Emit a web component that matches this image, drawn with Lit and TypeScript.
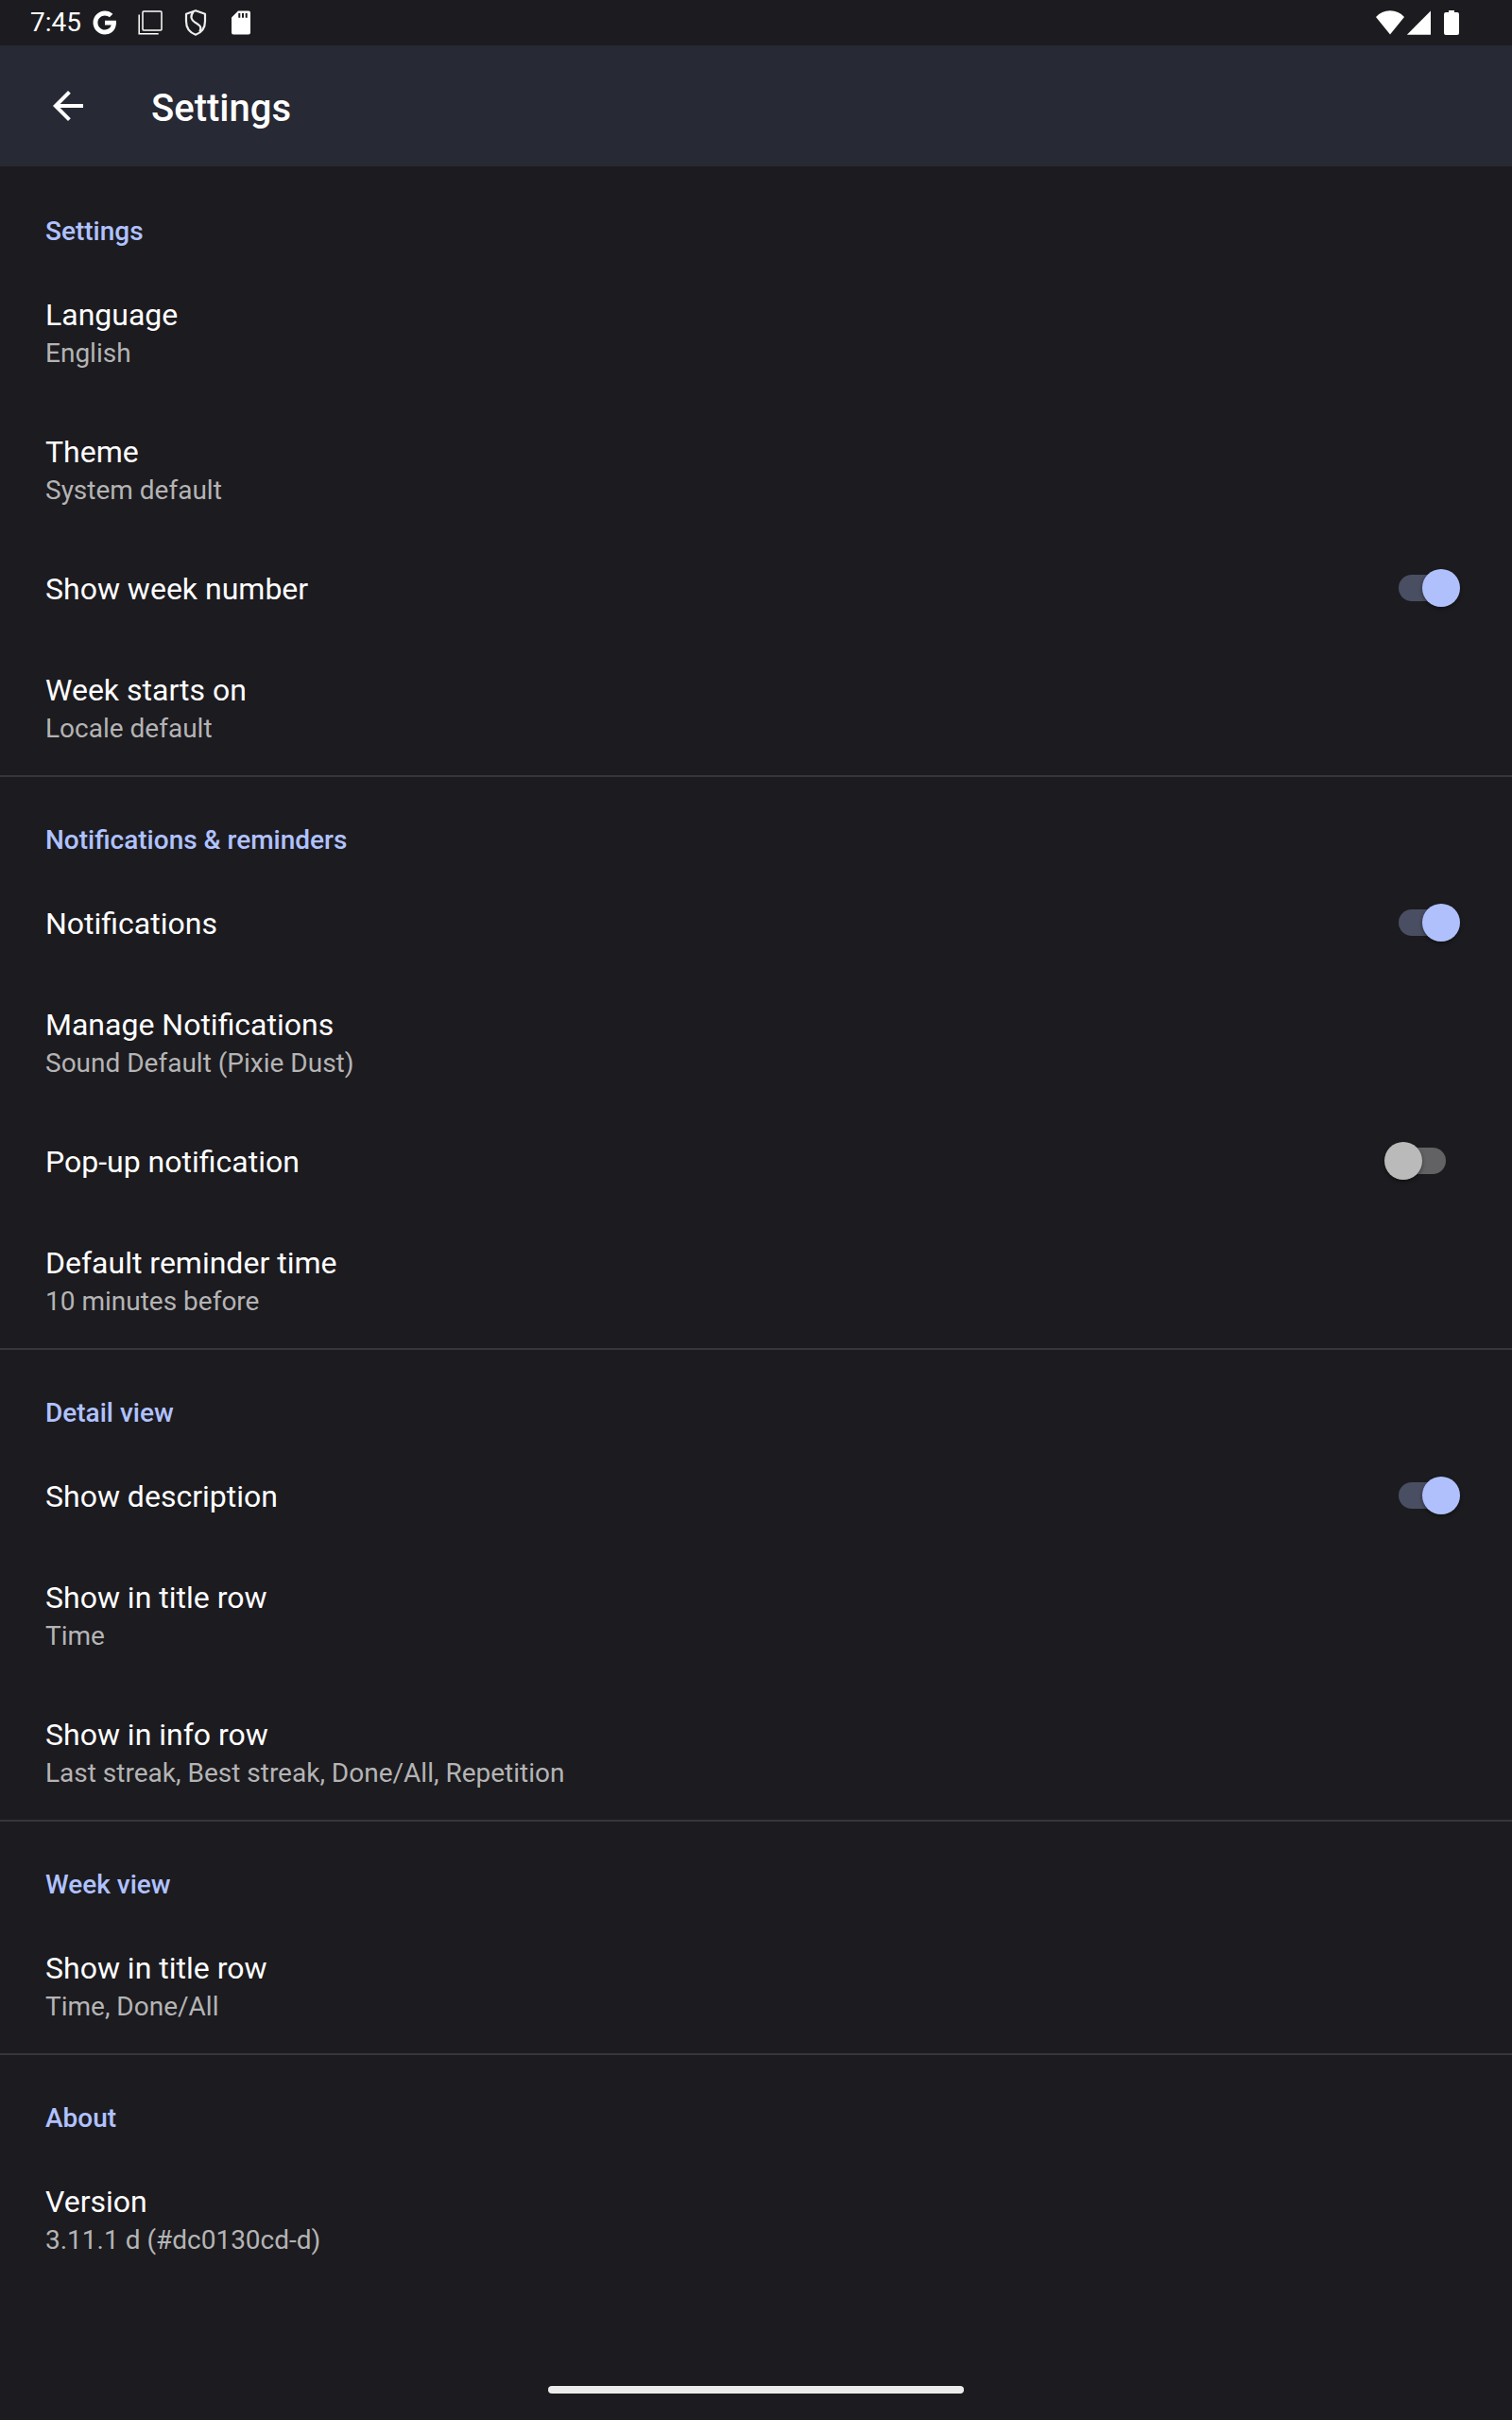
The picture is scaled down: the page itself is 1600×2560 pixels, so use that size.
import { LitElement, html, css, svg, nothing } from "lit";
import { customElement, state } from "lit/decorators.js";

interface Row {
  title: string;
  summary?: string;
  on?: boolean;
}

interface Section {
  heading: string;
  rows: Row[];
}

const statusIcons = {
  google: svg`<path fill="#fff" transform="translate(8.300 9) scale(1.250)" d="M12.545,10.239v3.821h5.445c-0.712,2.315-2.647,3.972-5.445,3.972c-3.332,0-6.033-2.701-6.033-6.032s2.701-6.032,6.033-6.032c1.498,0,2.866,0.549,3.921,1.453l2.814-2.814C17.503,2.988,15.139,2,12.545,2C7.021,2,2.543,6.477,2.543,12s4.478,10,10.002,10c8.396,0,10.249-7.85,9.426-11.748L12.545,10.239z"/>`,
  screens: svg`<rect x="16" y="12" width="20" height="20" rx="1" fill="none" stroke="#fff" stroke-width="1.500"/><path d="M12.200 15.500v20.300h20.500" fill="none" stroke="#fff" stroke-width="1.500"/>`,
  shield: svg`<path d="M24 11.200 34 14.700V22.500C34 29.500 30 34.500 24 36.700C18 34.500 14 29.500 14 22.500V14.700Z" fill="none" stroke="#eee" stroke-width="2.200" stroke-linejoin="round"/><path d="M21.500 12.500C18 17.500 19 20.800 23.500 23.800C28.500 27 31 28.500 28.300 33.500" fill="none" stroke="#eee" stroke-width="2.200"/>`,
  sdcard: svg`<path fill="#fff" fill-rule="evenodd" d="M21 11.500H32A2 2 0 0 1 34 13.500V34.500A2 2 0 0 1 32 36.500H16A2 2 0 0 1 14 34.500V18.500ZM21.300 14V18.800H23.300V14ZM25 14V18.800H27V14ZM28.700 14V18.800H30.700V14Z"/>`,
};

@customElement("app-root")
export class AppRoot extends LitElement {
  static styles = css`
    :host {
      display: flex;
      flex-direction: column;
      min-height: 100vh;
      background: #1c1b1f;
      color: #fff;
      font-family: Roboto, "Noto Sans", sans-serif;
    }
    .status {
      display: flex;
      align-items: center;
      height: 48px;
      padding: 0 48px 0 32px;
    }
    .time {
      margin-right: 1px;
      font-size: 28px;
      line-height: 38px;
    }
    .slot {
      width: 48px;
      height: 48px;
    }
    .system {
      display: flex;
      margin-left: auto;
    }
    .signal {
      width: 32px;
      height: 48px;
    }
    .bar {
      display: flex;
      align-items: center;
      gap: 64px;
      height: 128px;
      padding: 0 48px;
      box-sizing: border-box;
      background: #272934;
    }
    .back {
      display: flex;
      padding: 0;
      border: 0;
      background: none;
      cursor: pointer;
    }
    .page-title {
      margin: 0;
      padding-top: 6px;
      font-size: 40px;
      line-height: 48px;
      font-weight: 500;
    }
    .section + .section {
      border-top: 2px solid #363639;
    }
    .heading {
      margin: 0;
      padding: 49px 48px 13px;
      color: #b0c2ff;
      font-size: 28px;
      line-height: 40px;
      font-weight: 500;
    }
    .section + .section .heading {
      padding-top: 47px;
    }
    .row {
      display: flex;
      align-items: center;
      justify-content: space-between;
      width: 100%;
      padding: 34px 48px 30px;
      box-sizing: border-box;
      border: 0;
      background: none;
      color: inherit;
      font: inherit;
      text-align: left;
      cursor: pointer;
    }
    .texts {
      display: flex;
      flex-direction: column;
    }
    .title {
      font-size: 32px;
      line-height: 43px;
    }
    .summary {
      color: #b4b4b5;
      font-size: 28px;
      line-height: 38px;
    }
    .switch-row {
      padding-right: 55px;
    }
    .switch {
      display: flex;
      align-items: center;
      appearance: none;
      width: 80px;
      height: 40px;
      margin: -4px 0 0;
      position: relative;
      cursor: pointer;
    }
    .switch::before {
      content: "";
      width: 50px;
      height: 28px;
      margin-left: 15px;
      border-radius: 14px;
      background: #626264;
    }
    .switch::after {
      content: "";
      position: absolute;
      left: 0;
      top: 0;
      width: 40px;
      height: 40px;
      border-radius: 50%;
      background: #bababa;
      box-shadow: 0 2px 4px rgba(0, 0, 0, 0.4);
    }
    .switch:checked::before {
      background: #4a4e62;
    }
    .switch:checked::after {
      left: 40px;
      background: #b0c0fc;
    }
    .nav {
      display: flex;
      justify-content: center;
      margin-top: auto;
      padding: 20px 0 28px;
    }
    .pill {
      width: 440px;
      height: 8px;
      border-radius: 4px;
      background: #ececec;
    }
  `;

  @state()
  private sections: Section[] = [
    {
      heading: "Settings",
      rows: [
        { title: "Language", summary: "English" },
        { title: "Theme", summary: "System default" },
        { title: "Show week number", on: true },
        { title: "Week starts on", summary: "Locale default" },
      ],
    },
    {
      heading: "Notifications & reminders",
      rows: [
        { title: "Notifications", on: true },
        { title: "Manage Notifications", summary: "Sound Default (Pixie Dust)" },
        { title: "Pop-up notification", on: false },
        { title: "Default reminder time", summary: "10 minutes before" },
      ],
    },
    {
      heading: "Detail view",
      rows: [
        { title: "Show description", on: true },
        { title: "Show in title row", summary: "Time" },
        { title: "Show in info row", summary: "Last streak, Best streak, Done/All, Repetition" },
      ],
    },
    {
      heading: "Week view",
      rows: [{ title: "Show in title row", summary: "Time, Done/All" }],
    },
    {
      heading: "About",
      rows: [{ title: "Version", summary: "3.11.1 d (#dc0130cd-d)" }],
    },
  ];

  private toggle(row: Row, event: Event) {
    row.on = (event.target as HTMLInputElement).checked;
    this.requestUpdate();
  }

  private renderRow(row: Row, id: string) {
    if (row.on !== undefined) {
      return html`<label class="row switch-row" for=${id}>
        <span class="title">${row.title}</span>
        <input
          class="switch"
          id=${id}
          type="checkbox"
          role="switch"
          .checked=${row.on}
          @change=${(e: Event) => this.toggle(row, e)}
        />
      </label>`;
    }
    return html`<button class="row" type="button">
      <span class="texts">
        <span class="title">${row.title}</span>
        ${row.summary ? html`<span class="summary">${row.summary}</span>` : nothing}
      </span>
    </button>`;
  }

  render() {
    return html`
      <div class="status">
        <span class="time">7:45</span>
        ${Object.values(statusIcons).map(
          (icon) => html`<svg class="slot" viewBox="0 0 48 48" aria-hidden="true">${icon}</svg>`
        )}
        <div class="system">
          <svg class="signal" viewBox="0 0 32 48" aria-hidden="true">
            <path fill="#fff" d="M15 36.500 0 18C4 13.500 9 11.300 15 11.300S26 13.500 30 18Z" />
          </svg>
          <svg class="signal" viewBox="0 0 32 48" aria-hidden="true">
            <path fill="#fff" d="M26 11.500V36.700H.800Z" />
          </svg>
          <svg class="signal" viewBox="0 0 32 48" aria-hidden="true">
            <path
              fill="#fff"
              d="M13 11h6v2h3a2 2 0 0 1 2 2v20a2 2 0 0 1-2 2H10a2 2 0 0 1-2-2V15a2 2 0 0 1 2-2h3Z"
            />
          </svg>
        </div>
      </div>
      <header class="bar">
        <button class="back" type="button" aria-label="Back">
          <svg width="48" height="48" viewBox="0 0 24 24" aria-hidden="true">
            <path fill="#fff" d="M20 11H7.830l5.590-5.590L12 4l-8 8 8 8 1.410-1.410L7.830 13H20v-2z" />
          </svg>
        </button>
        <h1 class="page-title">Settings</h1>
      </header>
      <main>
        ${this.sections.map(
          (section, s) => html`<section class="section">
            <h2 class="heading">${section.heading}</h2>
            ${section.rows.map((row, r) => this.renderRow(row, `switch-${s}-${r}`))}
          </section>`
        )}
      </main>
      <footer class="nav"><div class="pill"></div></footer>
    `;
  }
}
